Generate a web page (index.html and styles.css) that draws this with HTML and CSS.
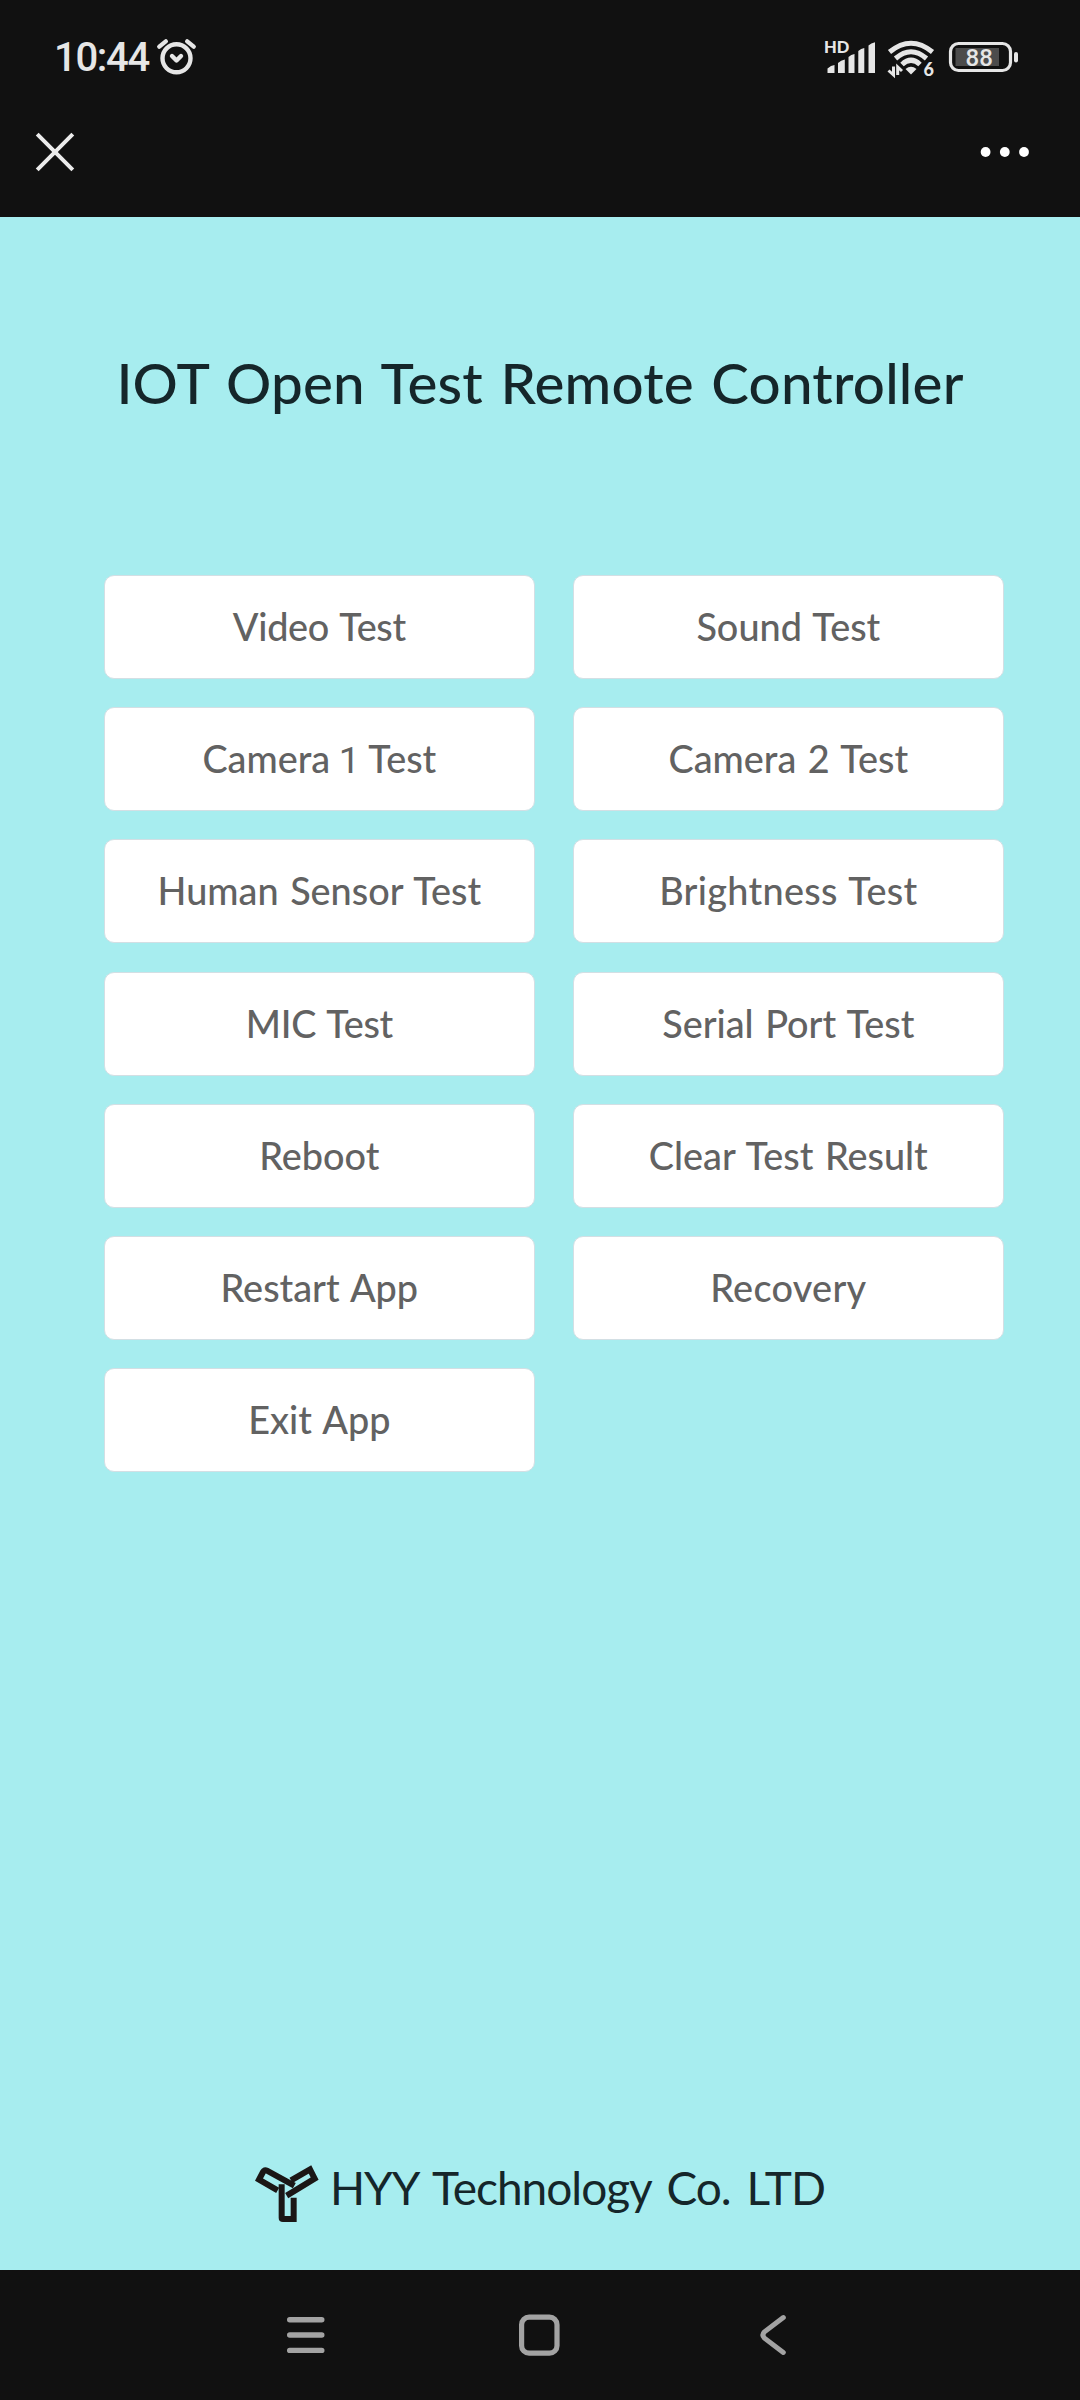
FILE: index.html
```html
<!DOCTYPE html>
<html lang="en">
<head>
<meta charset="utf-8">
<title>IOT Open Test Remote Controller</title>
<link rel="stylesheet" href="styles.css">
</head>
<body>
<div class="screen">
  <header class="top">
    <div class="status">
      <span class="clock">10:44</span>
      <svg class="alarm" width="42" height="40" viewBox="156 38 42 40" fill="none" stroke="#e6e6e6" stroke-width="4.4" stroke-linecap="round" stroke-linejoin="round">
        <circle cx="176.5" cy="58.3" r="14"/>
        <path d="M159.3 46.6 165.8 41.4M187.2 41.4 193.7 46.6M172 56l4.5 4.5L181 56"/>
      </svg>
      <svg class="indicators" width="200" height="44" viewBox="822 36 200 44">
        <g fill="#e6e6e6">
          <text x="824" y="53" class="hd">HD</text>
          <path d="M827.5 68.5Q831 65 834.5 65V73H827.5ZM838 63Q841 60 844.8 59.500V73H838ZM848.500 57Q851 54.500 854.500 54V73H848.500ZM858.300 51Q861 48.500 864.300 48V73H858.300ZM868.500 45.500Q871 43 875 42.300V73H868.500Z"/>
          <path d="M905.500 69Q911 64.500 916.500 69L911 74.500Z"/>
          <text x="923.500" y="75.500" class="gen">6</text>
          <rect x="955.5" y="48" width="43.5" height="18" fill="#4c4c4c"/>
          <text x="965.500" y="66" class="charge">88</text>
          <rect x="1014" y="52" width="4" height="10.500" rx="2"/>
        </g>
        <g fill="none" stroke="#e6e6e6">
          <path stroke-width="5" d="M889.500 52Q911 34.500 932.500 52M895.500 58.500Q911 45 926.500 58.500M902 64.500Q911 56 920 64.500"/>
          <path stroke-width="3" d="M893.500 66.500V75L888.500 70.500M897.700 75V67L902 71"/>
          <rect x="950.500" y="43.500" width="60" height="27" rx="8" stroke-width="3.200"/>
        </g>
      </svg>
    </div>
    <div class="toolbar">
      <svg width="40" height="40" viewBox="34.500 132.500 40 40" fill="none" stroke="#ececec" stroke-width="4"><path d="M36.700 134.700 72.300 170.300M72.300 134.700 36.700 170.300"/></svg>
      <svg width="50" height="12" viewBox="980 146.500 50 12" fill="#fff"><circle cx="985.600" cy="152.500" r="4.900"/><circle cx="1004.800" cy="152.500" r="4.900"/><circle cx="1024" cy="152.500" r="4.900"/></svg>
    </div>
  </header>

  <main class="page">
    <h1 class="title">IOT Open Test Remote Controller</h1>
    <div class="buttons">
      <button class="btn snug">Video Test</button>
      <button class="btn">Sound Test</button>
      <button class="btn">Camera <span class="one">1</span> Test</button>
      <button class="btn">Camera 2 Test</button>
      <button class="btn">Human Sensor Test</button>
      <button class="btn loose">Brightness Test</button>
      <button class="btn snug">MIC Test</button>
      <button class="btn">Serial Port Test</button>
      <button class="btn">Reboot</button>
      <button class="btn">Clear Test Result</button>
      <button class="btn">Restart App</button>
      <button class="btn loose">Recovery</button>
      <button class="btn">Exit App</button>
    </div>
    <footer class="brand">
      <svg width="64" height="58" viewBox="76 104 192 174" fill="none" stroke="#1b1716" stroke-width="18">
        <path d="M144 180 88 148 100 125Q104 117 112 121L194 166"/>
        <path d="M184 150 241 117 255 145 171 196"/>
        <path d="M156 162V262Q156 266 160 266H192V202"/>
      </svg>
      <span class="company">HYY Technology Co. LTD</span>
    </footer>
  </main>

  <nav class="nav">
    <svg width="40" height="44" viewBox="0 0 40 44" fill="none" stroke="#a3a3a3" stroke-width="5.400" stroke-linecap="round"><path d="M3.700 6.700H35.800M3.700 22H35.800M3.700 37.400H35.800"/></svg>
    <svg class="home" width="44" height="44" viewBox="0 0 44 44" fill="none" stroke="#a3a3a3" stroke-width="5.200"><rect x="4.600" y="4.200" width="35.400" height="36" rx="7.500"/></svg>
    <svg width="30" height="44" viewBox="0 0 30 44" fill="none" stroke="#a3a3a3" stroke-width="5" stroke-linecap="round"><path d="M25.300 4.600 6.500 18.800Q3.300 22 6.500 25.200L25.300 39.400"/></svg>
  </nav>
</div>
</body>
</html>
```
FILE: styles.css
```css
* { box-sizing: border-box; }

body {
  margin: 0;
  background: #a7edef;
  font-family: Lato, sans-serif;
}

.screen {
  display: flex;
  flex-direction: column;
  width: 1080px;
  height: 2400px;
}

svg { display: block; flex: none; }

.top {
  height: 217px;
  background: #111;
}

.status {
  display: flex;
  align-items: center;
  height: 116px;
  padding: 0 58px 0 54px;
}

.clock {
  width: 102px;
  color: #e6e6e6;
  font: 500 40px/40px Roboto, sans-serif;
  letter-spacing: -1.3px;
}

.indicators { margin-left: auto; }

.hd { font: 900 16.5px Lato, sans-serif; }
.gen { font: 900 18px Lato, sans-serif; }
.charge { font: 500 24px Roboto, sans-serif; }

.toolbar {
  display: flex;
  justify-content: space-between;
  align-items: center;
  height: 72px;
  padding: 0 50px 0 34.5px;
}

.page {
  display: flex;
  flex-direction: column;
  height: 2053px;
  background: #a7edef;
}

.title {
  margin: 128.5px 0 0;
  color: #15262a;
  font-size: 56.5px;
  font-weight: 500;
  line-height: 72px;
  letter-spacing: 0.2px;
  word-spacing: 3px;
  text-align: center;
}

.buttons {
  display: grid;
  grid-template-columns: 430.7px 430.7px;
  grid-auto-rows: 104px;
  gap: 28.2px 38.3px;
  margin: 157.5px 0 0 104px;
}

.btn {
  padding: 0;
  border: 1.5px solid #d3dfe4;
  border-radius: 10px;
  background: #fff;
  color: #626262;
  font: 500 37.8px/48px Lato, sans-serif;
  word-spacing: 2px;
}

.snug { letter-spacing: -0.3px; }
.loose { letter-spacing: 0.3px; }

.one {
  margin: 0 -2px 0 -3px;
  font-family: Roboto, sans-serif;
  font-weight: 400;
  line-height: 1;
}

.brand {
  display: flex;
  align-items: center;
  height: 60px;
  margin: auto 0 46px 255px;
}

.company {
  margin: -12px 0 0 11px;
  color: #15262a;
  font-size: 46px;
  line-height: 56px;
  letter-spacing: -1px;
  word-spacing: 5px;
  white-space: nowrap;
}

.nav {
  display: flex;
  justify-content: space-between;
  height: 130px;
  padding: 43px 292px 0 286px;
  background: #111;
}

.home { margin: 0 3.5px 0 -3.5px; }
```
